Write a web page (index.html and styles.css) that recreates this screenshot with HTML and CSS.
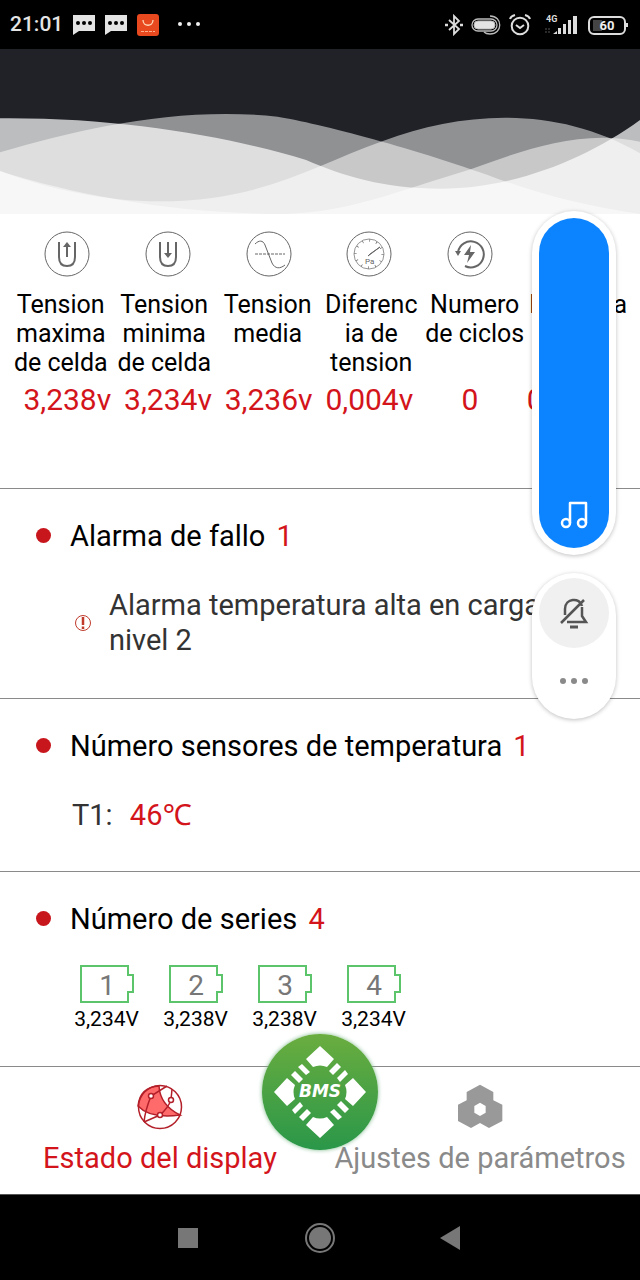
FILE: index.html
```html
<!DOCTYPE html>
<html lang="es">

<head>
    <meta charset="UTF-8">
    <meta name="viewport" content="width=device-width, initial-scale=1">
    <title>BMS</title>
    <link rel="stylesheet" href="styles.css">
</head>

<body>
    <div class="screen">

        <div class="status-bar">
            <span class="clock">21:01</span>
            <svg class="chat" width="22" height="20" viewBox="0 0 22 20">
                <path d="M0 0h22v16H6l-6 4z" fill="#e4e4e4" />
                <g fill="#000"><circle cx="5" cy="8" r="2" /><circle cx="11" cy="8" r="2" /><circle cx="17" cy="8" r="2" /></g>
            </svg>
            <svg class="chat" width="22" height="20" viewBox="0 0 22 20">
                <path d="M0 0h22v16H6l-6 4z" fill="#e4e4e4" />
                <g fill="#000"><circle cx="5" cy="8" r="2" /><circle cx="11" cy="8" r="2" /><circle cx="17" cy="8" r="2" /></g>
            </svg>
            <svg width="22" height="22" viewBox="0 0 22 22">
                <rect width="22" height="22" rx="3" fill="#e8491f" />
                <path d="M6 6c0 7 10 7 10 0" fill="none" stroke="#ffd9b8" stroke-width="1.3" />
                <path d="M4 17.500h14" stroke="#ffb08a" stroke-dasharray="3 1" />
            </svg>
            <svg class="more" width="24" height="22" viewBox="0 0 24 22" fill="#f0f0f0">
                <circle cx="3" cy="10" r="2" /><circle cx="12" cy="10" r="2" /><circle cx="21" cy="10" r="2" />
            </svg>

            <div class="status-icons">
                <svg width="18" height="22" viewBox="0 0 18 22" fill="none" stroke="#ddd" stroke-width="1.8">
                    <path d="M4 6l10 9-5 5V2l5 5-10 9" />
                    <path d="M0 11h3M15 11h3" stroke-width="2.500" />
                </svg>
                <svg width="30" height="22" viewBox="0 0 30 22" fill="none" stroke="#bbb">
                    <rect x="1" y="5" width="25" height="12" rx="6" stroke-width="1.300" />
                    <rect x="3" y="7" width="21" height="8" rx="4" fill="#e4e4e4" />
                    <path d="M19 2c13 0 13 18 0 18q-4 0-6-2" stroke-width="1.300" />
                </svg>
                <svg width="22" height="22" viewBox="0 0 22 22" fill="none" stroke="#ddd" stroke-width="2">
                    <circle cx="11" cy="12" r="8.300" />
                    <path d="M7 11l4 3 4-3M1 5q1-3 5-4M21 5q-1-3-5-4" />
                </svg>
                <svg class="signal" width="34" height="22" viewBox="0 0 34 22" fill="#ddd">
                    <text class="net" x="2" y="8">4G</text>
                    <path d="M9 20l4-3v3zM14 14h3v6h-3zM19 10h3v10h-3zM24 6h3v14h-3zM29 2h4v18h-4z" />
                    <path d="M2 14v6M5 14v6" stroke="#555" stroke-dasharray="2 1" />
                </svg>
                <svg width="42" height="22" viewBox="0 0 42 22">
                    <rect x="1" y="3" width="36" height="17" rx="5" fill="none" stroke="#ddd" stroke-width="2" />
                    <rect x="5" y="6" width="9" height="11" fill="#444" />
                    <path d="M39 9v4" stroke="#ddd" stroke-width="2" />
                    <text class="level" x="19" y="16">60</text>
                </svg>
            </div>
        </div>

        <svg class="waves" viewBox="0 -153 1568 495" preserveAspectRatio="none" fill="#fff">
            <path fill-opacity=".7" d="M0 55C300 52 560 110 750 180C840 228 940 266 1080 266C1260 266 1440 175 1568 60V342H0Z" />
            <path fill-opacity=".5" d="M0 157C200 85 440 18 680 50C780 70 1020 145 1240 245C1340 287 1440 320 1568 342H0Z" />
            <path fill-opacity=".5" d="M0 212C120 268 260 304 390 304C640 304 760 200 940 122C1130 36 1360 12 1568 160V342H0Z" />
            <path fill-opacity=".5" d="M0 214C200 290 440 342 700 342C860 335 960 278 1155 207C1280 152 1420 86 1568 125V342H0Z" />
        </svg>

        <main>
            <section class="metrics">
                <div class="metric-icons">
                    <svg viewBox="0 0 46 46">
                        <circle cx="23" cy="23" r="22" />
                        <path class="thick" d="M15 11v15q0 9 8 9t8-9V11M23 26V14" />
                        <path class="solid" d="M19 16l4-5 4 5z" />
                    </svg>
                    <svg viewBox="0 0 46 46">
                        <circle cx="23" cy="23" r="22" />
                        <path class="thick" d="M15 11v15q0 9 8 9t8-9V11M23 11v12" />
                        <path class="solid" d="M19 22l4 5 4-5z" />
                    </svg>
                    <svg viewBox="0 0 46 46">
                        <circle cx="23" cy="23" r="22" />
                        <path d="M9 13c4-4 8-4 10 1l7 18c3 6 8 6 13 2" />
                        <path d="M9 23h30" stroke-dasharray="3 1" />
                    </svg>
                    <svg viewBox="0 0 46 46">
                        <circle cx="23" cy="23" r="22" />
                        <circle cx="23" cy="23" r="15" stroke-width=".7" />
                        <circle cx="23" cy="23" r="13.500" stroke-width="2.500" stroke-dasharray=".7 6.370" />
                        <path d="M22 25l12-9-10 7z" />
                        <text class="unit" x="19" y="33">Pa</text>
                    </svg>
                    <svg viewBox="0 0 46 46">
                        <circle cx="23" cy="23" r="22" />
                        <path class="thick" d="M11 21a13 13 0 1 1 7 14" />
                        <path class="solid" d="M8 20h6l-3 5zM24 14l-7 10h5l-2 8 8-11h-5z" />
                    </svg>
                    <svg viewBox="0 0 46 46">
                        <circle cx="23" cy="23" r="22" />
                    </svg>
                </div>
                <div class="metric-labels">
                    <span>Tension maxima de celda</span>
                    <span>Tension minima de celda</span>
                    <span>Tension media</span>
                    <span>Diferenc<wbr>ia de tension</span>
                    <span>Numero de ciclos</span>
                    <span>Potencia</span>
                </div>
                <div class="metric-values">
                    <span>3,238v</span>
                    <span>3,234v</span>
                    <span>3,236v</span>
                    <span>0,004v</span>
                    <span>0</span>
                    <span>0,000v</span>
                </div>
            </section>

            <section class="block">
                <h2>Alarma de fallo <span class="red">1</span></h2>
                <div class="alarm">
                    <svg width="18" height="18" viewBox="0 0 18 18" fill="none" stroke="#c0392b">
                        <circle cx="9" cy="9" r="7.500" />
                        <path d="M9 3v8M9 12.500v2.500" stroke-width="2.500" />
                    </svg>
                    <p>Alarma temperatura alta en carga nivel 2</p>
                </div>
            </section>

            <section class="block">
                <h2>Número sensores de temperatura <span class="red">1</span></h2>
                <p class="sensor">T1: <span class="red">46℃</span></p>
            </section>

            <section class="block series">
                <h2>Número de series <span class="red">4</span></h2>
                <div class="cells">
                    <div class="cell">
                        <svg viewBox="0 0 54 38"><path d="M1 1h47v9h5v17h-5v10H1z" /><text x="27" y="30">1</text></svg>
                        <span>3,234V</span>
                    </div>
                    <div class="cell">
                        <svg viewBox="0 0 54 38"><path d="M1 1h47v9h5v17h-5v10H1z" /><text x="27" y="30">2</text></svg>
                        <span>3,238V</span>
                    </div>
                    <div class="cell">
                        <svg viewBox="0 0 54 38"><path d="M1 1h47v9h5v17h-5v10H1z" /><text x="27" y="30">3</text></svg>
                        <span>3,238V</span>
                    </div>
                    <div class="cell">
                        <svg viewBox="0 0 54 38"><path d="M1 1h47v9h5v17h-5v10H1z" /><text x="27" y="30">4</text></svg>
                        <span>3,234V</span>
                    </div>
                </div>
            </section>
        </main>

        <nav class="tabs">
            <button class="tab active">
                <svg viewBox="0 0 48 48" fill="none" stroke="#b3202a" stroke-width="1.500">
                    <path d="M23 3Q24 22 44 32Q14 36 2 23Q4 4 23 3" fill="#ff6b6b" />
                    <circle cx="24" cy="24" r="21.500" />
                    <path d="M8 39Q9 28 15 13L31 3M36 6L35 17Q32 25 24 32L8 39" />
                    <g fill="#fff"><circle cx="15" cy="13" r="2.500" /><circle cx="35" cy="17" r="2.500" /><circle cx="24" cy="32" r="2.500" /></g>
                </svg>
                Estado del display
            </button>
            <button class="tab">
                <svg viewBox="0 0 144 144" fill="#999" fill-rule="evenodd">
                    <path d="M72 5L112 27V52L139 65V114L99 135L72 120L45 135L6 114V65L32 52V27ZM72 59L55 69V89L72 99L89 89V69Z" />
                </svg>
                Ajustes de parámetros
            </button>
            <button class="bms" aria-label="BMS">
                <svg viewBox="-58 -58 116 116" fill="#fff">
                    <defs>
                        <g id="side">
                            <path d="M33 -14L46 0L33 14L25 7Q28 0 25 -7Z" />
                            <path d="M9 -21L13 -17L21 -25L17 -29ZM17 -14L20 -10L28 -18L25 -22Z" />
                        </g>
                    </defs>
                    <use href="#side" />
                    <use href="#side" transform="rotate(90)" />
                    <use href="#side" transform="rotate(180)" />
                    <use href="#side" transform="rotate(270)" />
                    <text x="0" y="5">BMS</text>
                </svg>
            </button>
        </nav>

        <div class="system-nav">
            <button aria-label="Recientes"><svg viewBox="0 0 30 30"><path d="M5 5h20v20H5z" /></svg></button>
            <button aria-label="Inicio"><svg viewBox="0 0 30 30"><circle cx="15" cy="15" r="14" fill="none" stroke="#777" stroke-width="2" /><circle cx="15" cy="15" r="11" /></svg></button>
            <button aria-label="Atrás"><svg viewBox="0 0 30 30"><path d="M3 15L23 3v24z" /></svg></button>
        </div>

        <div class="volume-panel">
            <div class="pill volume">
                <input type="range" min="0" max="100" value="100" aria-label="Volumen">
                <svg width="28" height="28" viewBox="0 0 28 28" fill="none" stroke="#fff" stroke-width="2.500">
                    <circle cx="6" cy="22" r="4" /><circle cx="22" cy="22" r="4" />
                    <path d="M10 22V2h16v20" stroke-linejoin="round" />
                </svg>
            </div>
            <div class="pill modes">
                <button class="mute" aria-label="Silencio">
                    <svg width="30" height="32" viewBox="0 0 30 32" fill="none" stroke="#555" stroke-width="2.500">
                        <path d="M6 18v-6c0-11 15-12 17-3M8 25h19l-4-6v-9M2 26L25 3" />
                        <path d="M11 30h8" stroke-width="3" />
                    </svg>
                </button>
                <button class="dots" aria-label="Más">
                    <svg width="30" height="8" viewBox="0 0 30 8" fill="#8a8a8a">
                        <circle cx="4" cy="4" r="3" /><circle cx="15" cy="4" r="3" /><circle cx="26" cy="4" r="3" />
                    </svg>
                </button>
            </div>
        </div>

    </div>
</body>

</html>
```
FILE: styles.css
```css
* {
    box-sizing: border-box;
}

body {
    font-family: Roboto, "Noto Sans", sans-serif;
    font-size: 29px;
    line-height: 35px;
    background: #fff;
    margin: 0;
    color: #000;
}

svg {
    display: block;
    flex: none;
}

button {
    font: inherit;
    color: inherit;
    background: none;
    border: none;
    padding: 0;
    cursor: pointer;
}

h2,
p {
    margin: 0;
    font-size: inherit;
    font-weight: 400;
}

.screen {
    position: relative;
    display: flex;
    flex-direction: column;
    min-height: 100vh;
}

.red {
    color: #d3141b;
}

/* status bar */

.status-bar {
    display: flex;
    align-items: center;
    gap: 10px;
    height: 49px;
    padding: 0 10px;
    background: #000;
    color: #e4e4e4;
}

.clock {
    font-size: 21px;
    font-weight: 500;
}

.more {
    margin-left: 8px;
}

.status-icons {
    display: flex;
    gap: 8px;
    margin-left: auto;
}

.signal {
    margin: 0 2px 0 5px;
}

.net {
    font-size: 9px;
    font-weight: 700;
}

.level {
    font-size: 13px;
    font-weight: 700;
    fill: #eee;
    text-anchor: middle;
}

.waves {
    width: 100%;
    height: 165px;
    background: #212227;
}

/* metrics */

.metrics {
    padding: 17px 0 71px;
    border-bottom: 1px solid #8a8a8a;
}

.metric-icons,
.metric-labels,
.metric-values {
    display: grid;
    grid-template-columns: repeat(6, 1fr);
    justify-items: center;
    text-align: center;
}

.metric-icons,
.metric-values {
    padding: 0 19px 0 17px;
}

.metric-icons svg {
    width: 46px;
    fill: none;
    stroke: #666;
}

.metric-icons .thick {
    stroke-width: 2;
}

.metric-icons .solid {
    fill: #666;
    stroke: none;
}

.unit {
    font-size: 8px;
    fill: #666;
    stroke: none;
}

.metric-labels {
    padding: 13px 10px 0 9px;
    font-size: 25px;
    line-height: 29px;
}

.metric-values {
    padding-top: 5px;
    font-size: 30px;
    color: #d3141b;
}

/* list blocks */

.block {
    padding: 30px 36px 38px 70px;
    border-bottom: 1px solid #8a8a8a;
}

.block h2 {
    position: relative;
    margin-bottom: 34px;
}

.block h2::before {
    content: "";
    position: absolute;
    left: -34px;
    top: 9px;
    width: 15px;
    height: 15px;
    border-radius: 50%;
    background: #c8161d;
}

.block h2 .red {
    margin-left: 4px;
}

.alarm {
    display: flex;
    align-items: center;
    gap: 17px;
    padding: 0 0 2px 4px;
    color: #333;
}

.sensor {
    padding-left: 2px;
    color: #333;
}

.sensor .red {
    margin-left: 10px;
}

.block.series {
    padding-bottom: 32px;
}

.series h2 {
    margin-bottom: 28px;
}

.cells {
    display: flex;
    gap: 24px;
    padding-left: 4px;
}

.cell {
    display: flex;
    flex-direction: column;
    align-items: center;
    gap: 1px;
    width: 65px;
    font-size: 21px;
    line-height: 30px;
}

.cell svg {
    width: 54px;
    fill: none;
    stroke: #5cc46a;
    stroke-width: 2;
}

.cell text {
    font-size: 28px;
    fill: #777;
    stroke: none;
    text-anchor: middle;
}

/* tab bar */

.tabs {
    position: relative;
    display: grid;
    grid-template-columns: 1fr 1fr;
    padding: 16px 0 18px;
}

.tab {
    display: flex;
    flex-direction: column;
    align-items: center;
    gap: 10px;
    color: #8a8a8a;
    white-space: nowrap;
}

.tab svg {
    width: 48px;
}

.tab.active {
    color: #d3141b;
}

.bms {
    position: absolute;
    top: -33px;
    left: 50%;
    width: 116px;
    height: 116px;
    margin-left: -58px;
    border-radius: 50%;
    background: linear-gradient(#6aad3f, #2a9749);
    box-shadow: 0 0 4px #7cba8a;
}

.bms text {
    font-family: "DejaVu Sans", sans-serif;
    font-size: 17px;
    font-weight: 700;
    font-style: italic;
    text-anchor: middle;
}

.system-nav {
    display: flex;
    flex: 1;
    justify-content: center;
    align-items: center;
    gap: 102px;
    min-height: 86px;
    border-top: 1px solid #555;
    background: #000;
}

.system-nav svg {
    width: 30px;
    fill: #777;
}

/* volume overlay */

.volume-panel {
    position: absolute;
    top: 211px;
    right: 24px;
    display: flex;
    flex-direction: column;
    gap: 18px;
    width: 84px;
}

.pill {
    padding: 7px;
    border-radius: 42px;
    background: #fff;
    box-shadow: 0 1px 4px rgba(0, 0, 0, 0.25);
}

.volume {
    position: relative;
}

.volume input {
    display: block;
    appearance: none;
    writing-mode: vertical-lr;
    width: 70px;
    height: 330px;
    margin: 0;
    border-radius: 35px;
    background: #0d84ff;
}

.volume input::-webkit-slider-thumb {
    appearance: none;
    width: 70px;
    height: 1px;
    background: transparent;
}

.volume svg {
    position: absolute;
    left: 28px;
    bottom: 26px;
    pointer-events: none;
}

.modes {
    display: flex;
    flex-direction: column;
    align-items: center;
    gap: 29px;
    padding: 5px 7px 34px;
}

.mute {
    display: grid;
    place-items: center;
    width: 70px;
    height: 70px;
    border-radius: 50%;
    background: #f0f0f0;
}
```
